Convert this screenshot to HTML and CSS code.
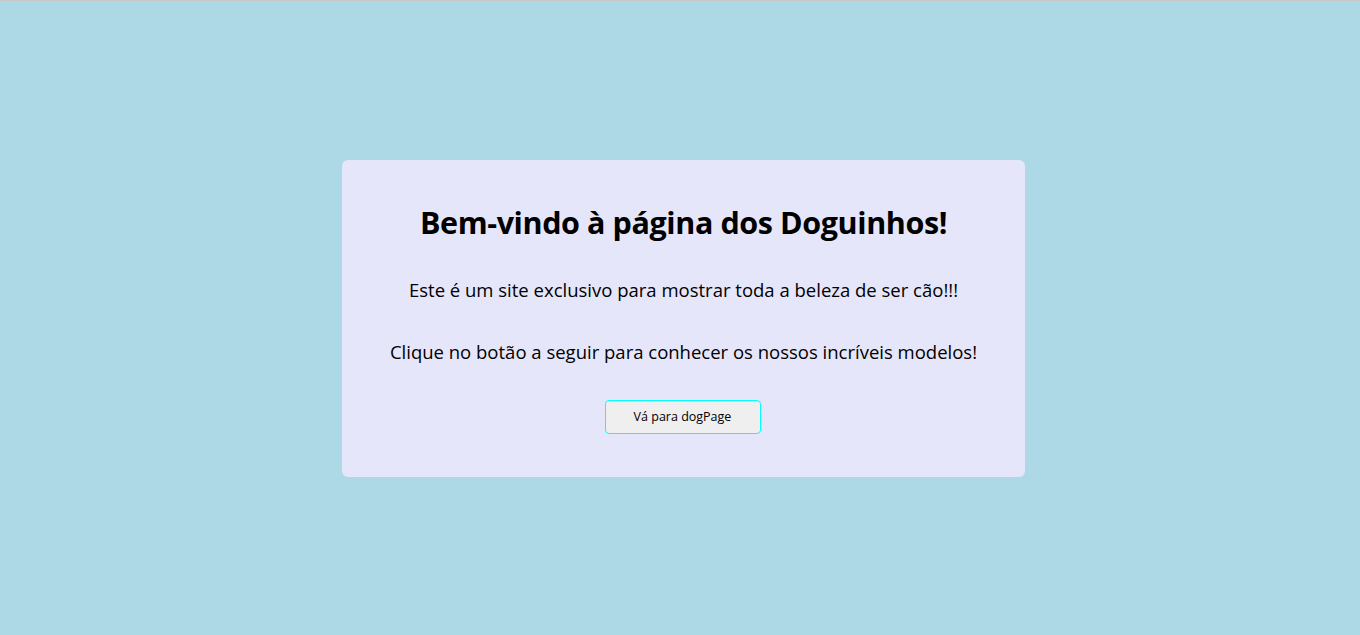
FILE: index.html
```html
<!DOCTYPE html>
<html lang="pt-BR">
<head>
<meta charset="utf-8">
<title>Doguinhos</title>
<link rel="stylesheet" href="styles.css">
</head>
<body>
  <main class="card">
    <h1 class="title">Bem-vindo à página dos Doguinhos!</h1>
    <p class="text">Este é um site exclusivo para mostrar toda a beleza de ser cão!!!</p>
    <p class="text text-second">Clique no botão a seguir para conhecer os nossos incríveis modelos!</p>
    <button class="btn" type="button">Vá para dogPage</button>
  </main>
</body>
</html>
```

FILE: styles.css
```css
* { box-sizing: border-box; }
html, body { margin: 0; padding: 0; }
body {
  min-height: 100vh;
  background: #add8e6;
  border-top: 1px solid #c9c9c9;
  display: flex;
  align-items: center;
  justify-content: center;
  padding-left: 7px;
  font-family: "Open Sans", "DejaVu Sans", sans-serif;
  color: #000;
}
.card {
  width: 683px;
  background: #e6e6fa;
  border-radius: 6px;
  padding: 43px 40px 43px;
  display: flex;
  flex-direction: column;
  align-items: center;
  text-align: center;
}
.title {
  margin: 0;
  font-size: 30.5px;
  line-height: 38px;
  font-weight: 700;
  letter-spacing: -0.4px;
}
.text {
  margin: 38px 0 0;
  font-size: 18.5px;
  line-height: 22px;
}
.text-second { margin-top: 40px; }
.btn {
  margin-top: 37px;
  margin-right: 2px;
  width: 156px;
  height: 34px;
  border: 1px solid #00ffff;
  border-radius: 4px;
  background: #efefef;
  font-family: "Open Sans", "DejaVu Sans", sans-serif;
  font-size: 12.5px;
  color: #000;
}
```
